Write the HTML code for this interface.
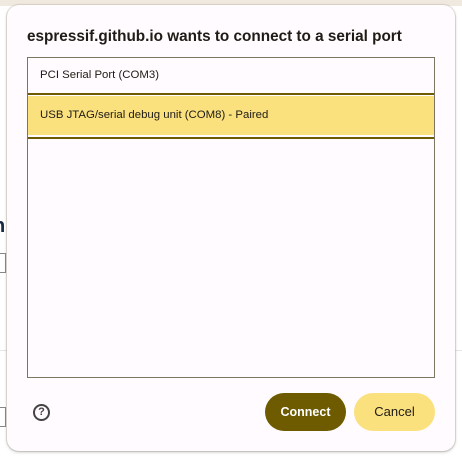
<!DOCTYPE html>
<html><head><meta charset="utf-8"><style>
html,body{margin:0;padding:0;width:462px;height:460px;overflow:hidden;background:#fff;font-family:"Liberation Sans",sans-serif;}
.top{position:absolute;left:0;top:0;width:462px;height:6px;background:#efe9e0;}
.bgline{position:absolute;left:0;top:350px;width:462px;height:1px;background:#e6e6e6;}
.dlg{position:absolute;left:7px;top:5px;width:448px;height:446px;background:#fffbfe;border-radius:12px;box-shadow:0 1px 3px rgba(0,0,0,.25),0 0 0 1px rgba(200,190,170,.35);}
.title{position:absolute;left:27px;top:28px;font-size:15.3px;font-weight:bold;color:#1f1b16;}
.list{position:absolute;left:27px;top:57px;width:406px;height:319px;border:1px solid #7c7564;background:#fffbfe;}
.r1{position:absolute;left:0;top:0;width:406px;height:35px;font-size:11.4px;color:#1f1b16;line-height:35px;padding-left:12px;box-sizing:border-box;}
.l1{position:absolute;left:0;top:35px;width:406px;height:2px;background:#6e5b00;}
.r2{position:absolute;left:0;top:38px;width:406px;height:39px;background:#fae17e;font-size:11.4px;color:#1f1b16;line-height:39px;padding-left:12px;box-sizing:border-box;}
.l2{position:absolute;left:0;top:79px;width:406px;height:2px;background:#6e5b00;}
.btn{position:absolute;top:393px;width:81px;height:38px;border-radius:19px;font-size:12.5px;font-weight:bold;text-align:center;line-height:38px;}
.c{left:265px;background:#6e5b00;color:#fff;}
.x{left:354px;background:#fae17e;color:#1f1b16;font-weight:normal;font-size:13px;}
.help{position:absolute;left:33px;top:404px;width:13px;height:13px;border:2px solid #444;border-radius:50%;font-size:11px;font-weight:bold;color:#444;text-align:center;line-height:13px;}
.frag{position:absolute;font-size:20px;color:#1a2a40;font-weight:bold;}
.box{position:absolute;border:1px solid #888;border-left:none;width:5px;height:18px;}
</style></head><body>
<div class="top"></div>
<div class="bgline"></div>
<div class="frag" style="left:-7px;top:215px;">n</div>
<div class="box" style="left:0;top:253px;"></div>
<div class="box" style="left:0;top:407px;"></div>
<div class="dlg"></div>
<div class="title">espressif.github.io wants to connect to a serial port</div>
<div class="list">
<div class="r1">PCI Serial Port (COM3)</div>
<div class="l1"></div>
<div class="r2">USB JTAG/serial debug unit (COM8) - Paired</div>
<div class="l2"></div>
</div>
<div class="help">?</div>
<div class="btn c">Connect</div>
<div class="btn x">Cancel</div>
</body></html>
